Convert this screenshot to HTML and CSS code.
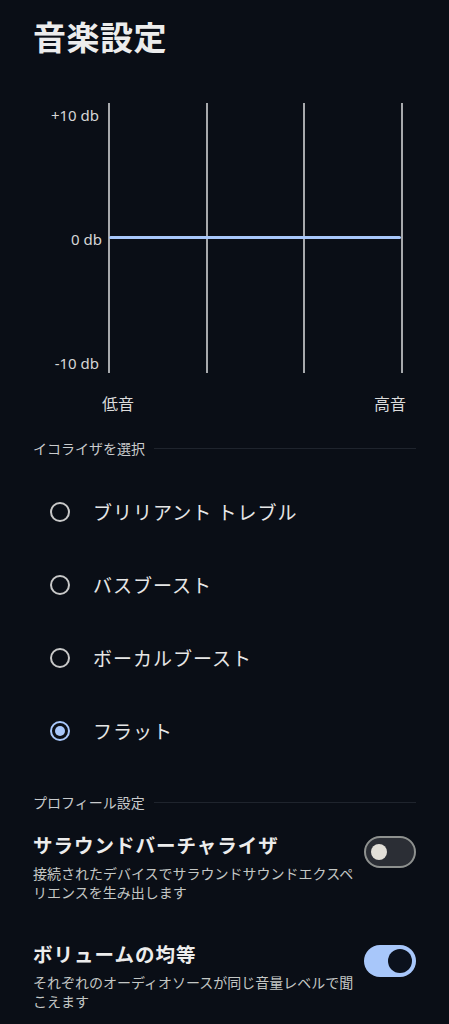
FILE: index.html
```html
<!DOCTYPE html>
<html lang="ja">
<head>
<meta charset="utf-8">
<title>音楽設定</title>
<link rel="stylesheet" href="styles.css">
</head>
<body>
<main class="page">
  <h1 class="title">音楽設定</h1>

  <section class="eq">
    <div class="chart">
      <div class="axis">
        <span>+10 db</span>
        <span>0 db</span>
        <span>-10 db</span>
      </div>
      <div class="plot">
        <div class="vline"></div>
        <div class="vline"></div>
        <div class="vline"></div>
        <div class="vline"></div>
        <div class="curve"></div>
      </div>
    </div>
    <div class="range">
      <span>低音</span>
      <span>高音</span>
    </div>
  </section>

  <div class="section-head"><span>イコライザを選択</span><div class="rule"></div></div>

  <ul class="radios">
    <li class="radio-row"><span class="radio"></span><span class="radio-label">ブリリアント トレブル</span></li>
    <li class="radio-row"><span class="radio"></span><span class="radio-label">バスブースト</span></li>
    <li class="radio-row"><span class="radio"></span><span class="radio-label">ボーカルブースト</span></li>
    <li class="radio-row"><span class="radio checked"></span><span class="radio-label">フラット</span></li>
  </ul>

  <div class="section-head head2"><span>プロフィール設定</span><div class="rule"></div></div>

  <div class="setting">
    <div class="setting-text">
      <div class="setting-title">サラウンドバーチャライザ</div>
      <div class="setting-desc">接続されたデバイスでサラウンドサウンドエクスペリエンスを生み出します</div>
    </div>
    <div class="toggle off"><span class="thumb"></span></div>
  </div>

  <div class="setting setting2">
    <div class="setting-text">
      <div class="setting-title">ボリュームの均等</div>
      <div class="setting-desc">それぞれのオーディオソースが同じ音量レベルで聞こえます</div>
    </div>
    <div class="toggle on"><span class="thumb"></span></div>
  </div>
</main>
</body>
</html>
```

FILE: styles.css
```css
html, body {
  margin: 0;
  padding: 0;
  background: #0a0e16;
}
body {
  font-family: "Noto Sans CJK JP", "Noto Sans", sans-serif;
  color: #e3e3e3;
}
.page {
  padding: 16px 33px 0 33px;
  box-sizing: border-box;
  width: 449px;
  height: 1024px;
  overflow: hidden;
}
.title {
  margin: 0;
  font-size: 33px;
  line-height: 40px;
  font-weight: 700;
  color: #ececec;
  letter-spacing: 0.5px;
}

/* chart */
.eq {
  margin-top: 47px;
}
.chart {
  display: flex;
  gap: 6px;
}
.axis {
  width: 69px;
  height: 270px;
  box-sizing: border-box;
  padding: 3px 0 1px;
  display: flex;
  flex-direction: column;
  justify-content: space-between;
  align-items: flex-end;
  font-size: 15px;
  line-height: 18px;
  color: #d6d6d6;
  font-family: "Noto Sans", sans-serif;
}
.axis span:nth-child(1),
.axis span:nth-child(3) {
  margin-right: 3px;
}
.plot {
  position: relative;
  width: 295px;
  height: 270px;
  display: flex;
  justify-content: space-between;
}
.vline {
  width: 2px;
  height: 100%;
  background: #a7a9ac;
}
.curve {
  position: absolute;
  left: 1px;
  right: 2px;
  top: 133px;
  height: 3px;
  border-radius: 2px;
  background: #a8c7fa;
}
.range {
  margin-top: 20px;
  margin-left: 69px;
  width: 304px;
  display: flex;
  justify-content: space-between;
  font-size: 16px;
  line-height: 20px;
  color: #dcdcdc;
}

/* section headers */
.section-head {
  margin-top: 26px;
  display: flex;
  align-items: center;
  gap: 9px;
  font-size: 14px;
  line-height: 18px;
  color: #c9cbcd;
}
.section-head .rule {
  flex: 1;
  height: 1px;
  background: #1f242d;
}
.head2 {
  margin-top: 25.5px;
}

/* radios */
.radios {
  list-style: none;
  margin: 18.5px 0 0;
  padding: 0;
}
.radio-row {
  height: 73px;
  display: flex;
  align-items: center;
  padding-left: 17px;
  gap: 23px;
}
.radio {
  width: 20px;
  height: 20px;
  box-sizing: border-box;
  border: 2px solid #c8c8c8;
  border-radius: 50%;
  display: flex;
  align-items: center;
  justify-content: center;
}
.radio.checked {
  border-color: #a8c7fa;
}
.radio.checked::after {
  content: "";
  width: 10px;
  height: 10px;
  border-radius: 50%;
  background: #a8c7fa;
}
.radio-label {
  font-size: 19px;
  line-height: 26px;
  letter-spacing: 1px;
  color: #e6e6e6;
}

/* settings */
.setting {
  margin-top: 21px;
  display: flex;
  align-items: flex-start;
  gap: 4px;
}
.setting2 {
  margin-top: 38.5px;
}
.setting-text {
  flex: 1;
}
.setting-title {
  font-size: 19.5px;
  line-height: 26px;
  font-weight: 700;
  letter-spacing: 1px;
  color: #ececec;
}
.setting-desc {
  margin-top: 6px;
  font-size: 14px;
  line-height: 19px;
  color: #c4c7c5;
}
.toggle {
  margin-top: 4px;
  width: 52px;
  height: 32px;
  box-sizing: border-box;
  border-radius: 16px;
  display: flex;
  align-items: center;
  flex-shrink: 0;
}
.toggle.off {
  background: #2b2e35;
  border: 2px solid #8e918f;
  padding-left: 5px;
  justify-content: flex-start;
}
.toggle.off .thumb {
  width: 16px;
  height: 16px;
  border-radius: 50%;
  background: #e2dfd8;
}
.toggle.on {
  background: #a8c7fa;
  padding-right: 4px;
  justify-content: flex-end;
}
.toggle.on .thumb {
  width: 24px;
  height: 24px;
  border-radius: 50%;
  background: #0b111c;
}
```
